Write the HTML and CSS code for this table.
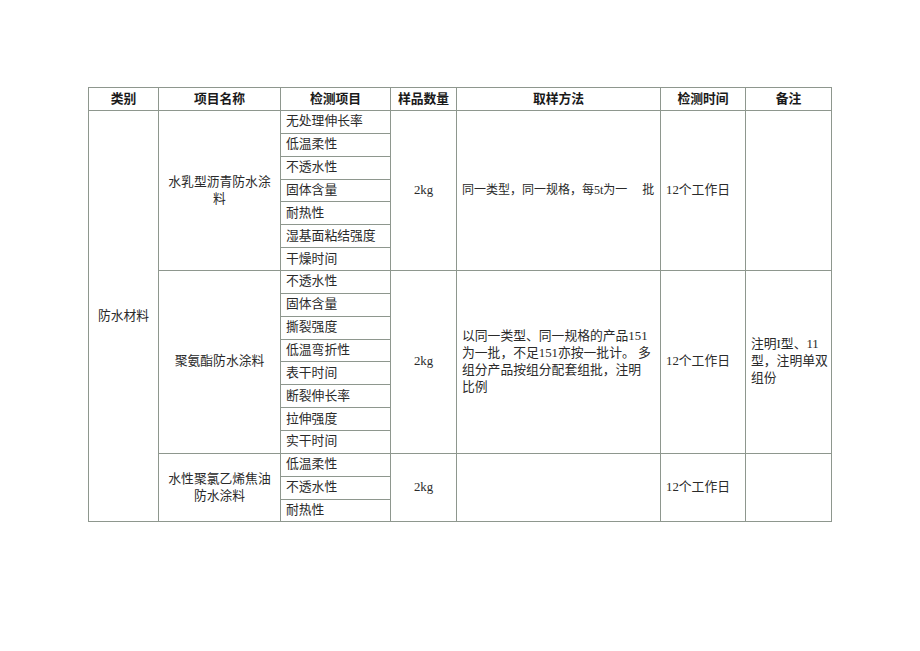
FILE: index.html
```html
<!DOCTYPE html>
<html lang="zh-CN">
<head>
<meta charset="utf-8">
<title>防水材料检测</title>
<link rel="stylesheet" href="styles.css">
</head>
<body>
<table class="sheet">
  <colgroup>
    <col class="c1"><col class="c2"><col class="c3"><col class="c4"><col class="c5"><col class="c6"><col class="c7">
  </colgroup>
  <thead>
    <tr class="head">
      <th>类别</th><th>项目名称</th><th>检测项目</th><th>样品数量</th><th>取样方法</th><th>检测时间</th><th>备注</th>
    </tr>
  </thead>
  <tbody>
    <tr>
      <td rowspan="18" class="center">防水材料</td>
      <td rowspan="7" class="center lines">水乳型沥青防水涂<br>料</td>
      <td class="item">无处理伸长率</td>
      <td rowspan="7" class="center">2kg</td>
      <td rowspan="7" class="method small">同一类型，同一规格，每5t为一<span class="gap">批</span></td>
      <td rowspan="7" class="left">12个工作日</td>
      <td rowspan="7" class="left"></td>
    </tr>
    <tr><td class="item">低温柔性</td></tr>
    <tr><td class="item">不透水性</td></tr>
    <tr><td class="item">固体含量</td></tr>
    <tr><td class="item">耐热性</td></tr>
    <tr><td class="item">湿基面粘结强度</td></tr>
    <tr><td class="item">干燥时间</td></tr>
    <tr>
      <td rowspan="8" class="center">聚氨酯防水涂料</td>
      <td class="item">不透水性</td>
      <td rowspan="8" class="center">2kg</td>
      <td rowspan="8" class="method lines">以同一类型、同一规格的产品151<br>为一批，不足151亦按一批计。 多<br>组分产品按组分配套组批，注明<br>比例</td>
      <td rowspan="8" class="left">12个工作日</td>
      <td rowspan="8" class="left lines">注明I型、11<br>型，注明单双<br>组份</td>
    </tr>
    <tr><td class="item">固体含量</td></tr>
    <tr><td class="item">撕裂强度</td></tr>
    <tr><td class="item">低温弯折性</td></tr>
    <tr><td class="item">表干时间</td></tr>
    <tr><td class="item">断裂伸长率</td></tr>
    <tr><td class="item">拉伸强度</td></tr>
    <tr><td class="item">实干时间</td></tr>
    <tr>
      <td rowspan="3" class="center lines">水性聚氯乙烯焦油<br>防水涂料</td>
      <td class="item">低温柔性</td>
      <td rowspan="3" class="center">2kg</td>
      <td rowspan="3" class="method"></td>
      <td rowspan="3" class="left">12个工作日</td>
      <td rowspan="3" class="left"></td>
    </tr>
    <tr><td class="item">不透水性</td></tr>
    <tr><td class="item">耐热性</td></tr>
  </tbody>
</table>
</body>
</html>
```
FILE: styles.css
```css
html, body {
  margin: 0;
  padding: 0;
  background: #ffffff;
}

body {
  padding: 87px 0 0 88px;
}

.sheet {
  border-collapse: collapse;
  table-layout: fixed;
  width: 743px;
  font-family: "Liberation Serif", "Noto Sans CJK SC", serif;
  font-size: 12.8px;
  color: #2a2a2a;
}

.c1 { width: 70px; }
.c2 { width: 122px; }
.c3 { width: 110px; }
.c4 { width: 66px; }
.c5 { width: 204px; }
.c6 { width: 85px; }
.c7 { width: 86px; }

.sheet th,
.sheet td {
  border: 1px solid #8e978e;
  padding: 0 5px;
  line-height: 17px;
  vertical-align: middle;
  overflow: visible;
  white-space: nowrap;
}

.sheet th {
  font-family: "Noto Sans CJK SC", sans-serif;
  font-weight: 700;
  font-size: 12.8px;
  color: #1a1a1a;
  text-align: center;
  padding-bottom: 3px;
}

.head {
  height: 23px;
}

.sheet tbody tr {
  height: 22.87px;
}

.center {
  text-align: center;
}

.left {
  text-align: left;
  padding-left: 6px;
}

.item {
  text-align: left;
  padding-left: 6px;
}

.method {
  text-align: left;
  padding-left: 6px;
}

.lines {
  line-height: 16.8px;
}

.small {
  font-size: 12px;
}

.gap {
  margin-left: 15px;
}
```
